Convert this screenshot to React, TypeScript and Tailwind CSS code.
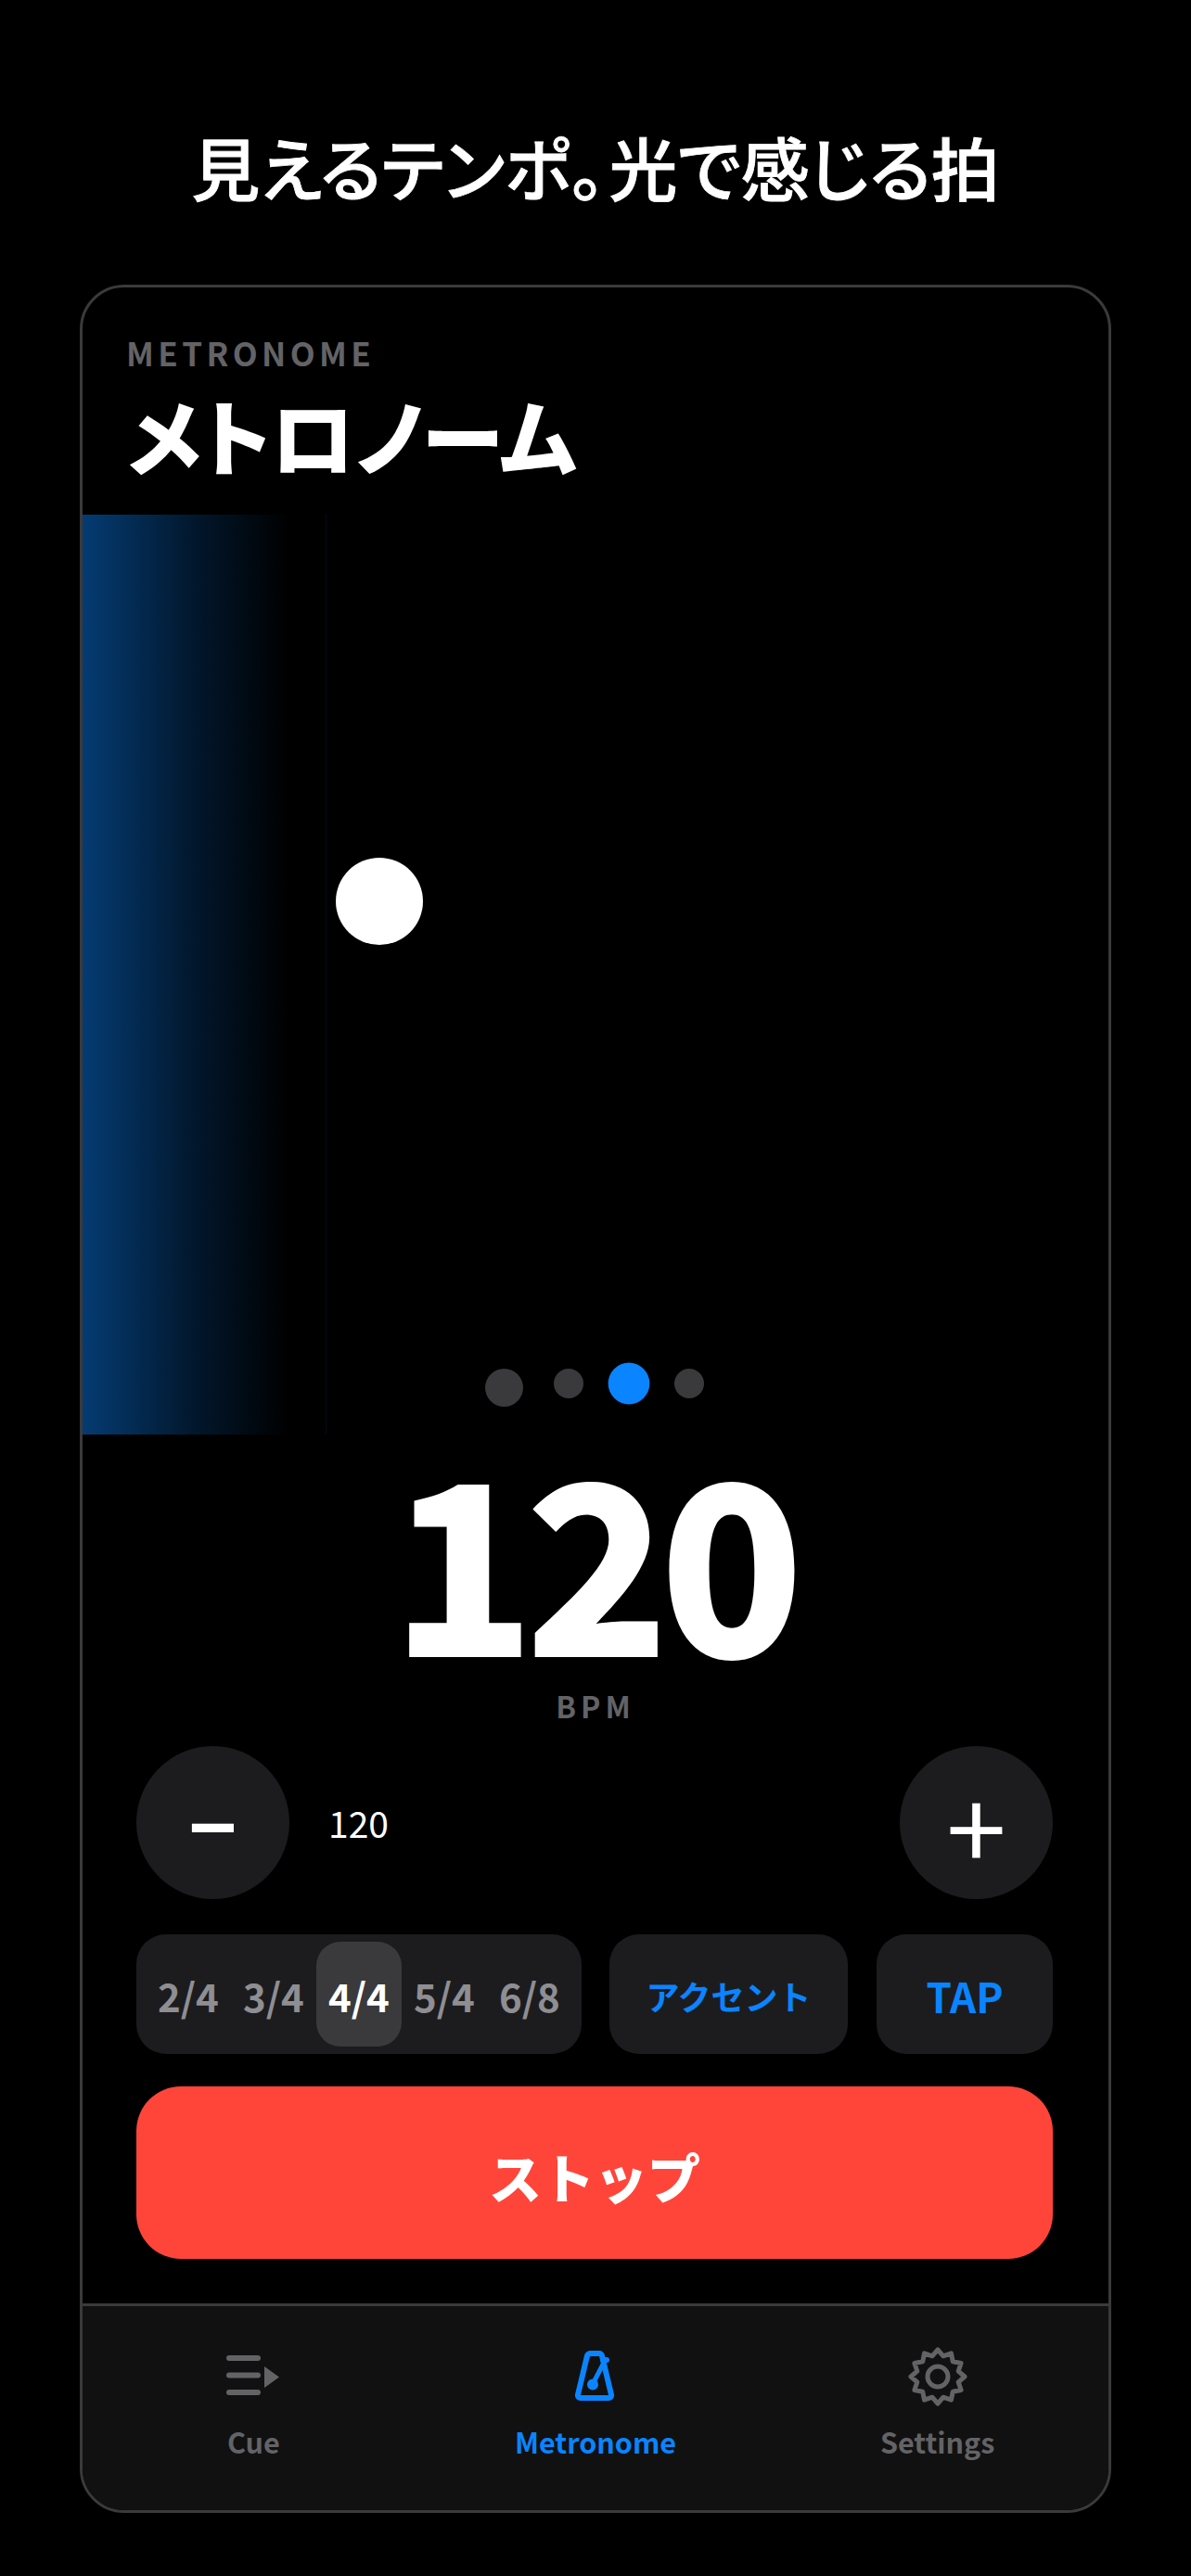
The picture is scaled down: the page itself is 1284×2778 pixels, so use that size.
const meters = ["2/4", "3/4", "4/4", "5/4", "6/8"];

// 12 point serrated outline for the settings gear
const gearPoints = Array.from({ length: 24 }, (_, i) => {
  const r = i % 2 === 0 ? 29 : 23;
  const a = (i * Math.PI) / 12 - Math.PI / 2;
  return `${(32 + r * Math.cos(a)).toFixed(2)},${(32 + r * Math.sin(a)).toFixed(2)}`;
}).join(" ");

function CueIcon() {
  return (
    <svg width="64" height="64" viewBox="0 0 64 64" fill="none">
      <path d="M6 12h31M6 30.500h31M6 49h31" stroke="#636366" strokeWidth="6" strokeLinecap="round" />
      <path d="M44 21l16 11.500-16 11.500z" fill="#636366" />
    </svg>
  );
}

function MetronomeIcon() {
  return (
    <svg width="64" height="64" viewBox="0 0 64 64" fill="none" stroke="#0a84ff" strokeWidth="6" strokeLinecap="round" strokeLinejoin="round">
      <path d="M27 7h9c1.500 0 2.500 1 3 2.500l10 42c.5 2-1 3.500-3 3.500H16c-2 0-3.500-1.500-3-3.500l10-42C23.500 8 25 7 27 7z" />
      <path d="M29 40L42 15" strokeWidth="5" />
      <path d="M40 14h4" />
      <circle cx="29" cy="40.500" r="3" fill="#0a84ff" />
    </svg>
  );
}

function GearIcon() {
  return (
    <svg width="64" height="64" viewBox="0 0 64 64" fill="none" stroke="#636366" strokeWidth="5" strokeLinejoin="round">
      <polygon points={gearPoints} />
      <circle cx="32" cy="32" r="11" />
    </svg>
  );
}

export default function App() {
  return (
    <div className="min-h-[2778px] w-[1284px] bg-black font-['Noto_Sans_CJK_JP',sans-serif] text-white">
      <h1 className="flex h-[307px] items-start justify-center pt-[129px] text-[74px] leading-[100px] font-medium [-webkit-text-stroke:0.8px_white] [font-feature-settings:'palt']">
        見えるテンポ。<span className="ml-[4px]">光で感じる拍</span>
      </h1>

      <div className="mx-[86px] flex h-[2403px] flex-col overflow-hidden rounded-[48px] border-[3px] border-[#3a3a3c] bg-black">
        <header className="h-[245px] px-[47px] pt-[45px]">
          <p className="text-[35px] leading-[50px] font-bold tracking-[4.400px] text-[#636366]">METRONOME</p>
          <h2 className="mt-[8px] ml-[1px] text-[89.500px] leading-[110px] font-black [font-feature-settings:'palt']">メトロノーム</h2>
        </header>

        <section className="relative h-[992px] shrink-0">
          <div className="absolute inset-y-0 left-0 w-[263px] border-r border-[#0a84ff]/10 bg-gradient-to-r from-[#0a84ff]/45 via-[#0a84ff]/[0.18] via-45% to-transparent to-85% bg-no-repeat" />
          <div className="absolute top-[370px] left-[273px] h-[94px] w-[94px] rounded-full bg-white" />
          <div className="absolute top-[921px] left-[434px] flex items-start gap-[33px]">
            <span className="h-[41px] w-[41px] rounded-full bg-[#3a3a3c]" />
            <span className="h-8 w-8 rounded-full bg-[#3a3a3c]" />
            <span className="h-8 w-8 scale-[1.4] rounded-full bg-[#0a84ff]" />
            <span className="h-8 w-8 rounded-full bg-[#3a3a3c]" />
          </div>
        </section>

        <section className="flex h-[310px] shrink-0 flex-col items-center">
          <div className="mt-[-6px] mr-[7px] h-[270px] text-[256px] leading-[270px] font-black tracking-[-11px]">120</div>
          <div className="mt-[8px] text-[32px] leading-[40px] font-bold tracking-[5px] text-[#636366]">BPM</div>
        </section>

        <section className="flex h-[627px] shrink-0 flex-col pt-[26px] pr-[60px] pl-[58px]">
          <div className="flex items-center">
            <button className="flex h-[165px] w-[165px] items-center justify-center rounded-full bg-[#1c1c1e] text-[88px] leading-none font-bold">−</button>
            <span className="ml-[42px] text-[39px] leading-none">120</span>
            <button className="ml-auto flex h-[165px] w-[165px] items-center justify-center rounded-full bg-[#1c1c1e] text-[116px] leading-none">+</button>
          </div>

          <div className="mt-[38px] flex h-[129px] items-stretch">
            <div className="flex w-[480px] rounded-[32px] bg-[#1c1c1e] px-[10px] py-[8px]">
              {meters.map((m) => (
                <span
                  key={m}
                  className={
                    m === "4/4"
                      ? "flex flex-1 items-center justify-center rounded-[26px] bg-[#3a3a3c] pt-[2px] text-[42px] font-bold text-white"
                      : "flex flex-1 items-center justify-center pt-[2px] text-[42px] font-bold text-[#8e8e93]"
                  }
                >
                  {m}
                </span>
              ))}
            </div>
            <button className="ml-[30px] w-[257px] rounded-[32px] bg-[#1c1c1e] pt-[2px] text-[36px] font-bold text-[#0a84ff]">アクセント</button>
            <button className="ml-[31px] w-[190px] rounded-[32px] bg-[#1c1c1e] pt-[2px] text-[44px] font-bold text-[#0a84ff]">TAP</button>
          </div>

          <button className="mt-[35px] h-[186px] rounded-[48px] bg-[#ff453a] pt-[8px] text-[57px] font-black">ストップ</button>
        </section>

        <nav className="flex flex-1 border-t-[3px] border-[#3a3a3c] bg-[#111111] pt-[44px]">
          <div className="flex flex-1 flex-col items-center">
            <CueIcon />
            <span className="mt-[16px] text-[30.500px] leading-[44px] font-bold text-[#636366]">Cue</span>
          </div>
          <div className="flex flex-1 flex-col items-center">
            <MetronomeIcon />
            <span className="mt-[16px] text-[30.500px] leading-[44px] font-bold text-[#0a84ff]">Metronome</span>
          </div>
          <div className="flex flex-1 flex-col items-center">
            <GearIcon />
            <span className="mt-[16px] text-[30.500px] leading-[44px] font-bold text-[#636366]">Settings</span>
          </div>
        </nav>
      </div>
    </div>
  );
}
